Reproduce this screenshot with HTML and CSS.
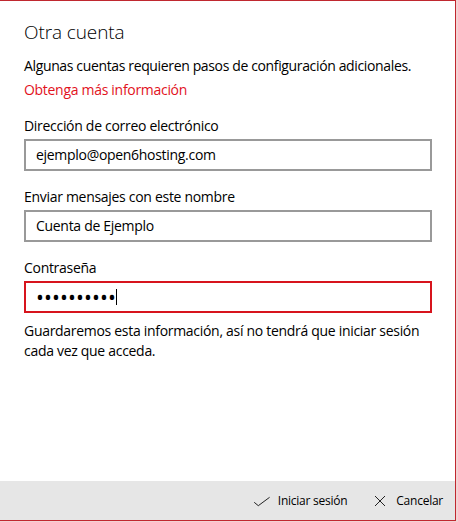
FILE: index.html
```html
<!DOCTYPE html>
<html lang="es">
<head>
<meta charset="utf-8">
<title>Otra cuenta</title>
<link rel="stylesheet" href="styles.css">
</head>
<body>
<div class="window">
  <main class="content">
    <h1 class="title">Otra cuenta</h1>
    <p class="desc">Algunas cuentas requieren pasos de configuración adicionales.</p>
    <a class="link" href="#">Obtenga más información</a>

    <div class="field">
      <label class="label">Dirección de correo electrónico</label>
      <div class="input">ejemplo@open6hosting.com</div>
    </div>
    <div class="field">
      <label class="label">Enviar mensajes con este nombre</label>
      <div class="input">Cuenta de Ejemplo</div>
    </div>
    <div class="field">
      <label class="label">Contraseña</label>
      <div class="input input-focus"><span class="dots">••••••••••</span><span class="caret"></span></div>
    </div>
    <p class="note">Guardaremos esta información, así no tendrá que iniciar sesión cada vez que acceda.</p>
  </main>
  <footer class="bar">
    <button class="btn">
      <svg class="icon" width="16" height="16" viewBox="0 0 16 16"><path d="M0.2 9.3 L4.3 12.7 L15.6 4.3" fill="none" stroke="#222" stroke-width="1"/></svg>
      <span>Iniciar sesión</span>
    </button>
    <button class="btn">
      <svg class="icon" width="16" height="16" viewBox="0 0 16 16"><path d="M3 3 L13 13 M13 3 L3 13" fill="none" stroke="#222" stroke-width="1"/></svg>
      <span>Cancelar</span>
    </button>
  </footer>
</div>
</body>
</html>
```
FILE: styles.css
```css
html, body {
  margin: 0;
  padding: 0;
}
body {
  background: #f2d3d4;
  font-family: "Open Sans", "Noto Sans", sans-serif;
  color: #000;
  width: 458px;
  height: 522px;
}
.window {
  box-sizing: border-box;
  width: 456px;
  height: 521px;
  background: #fff;
  border-top: 1px solid #c0282f;
  border-right: 1px solid #c0282f;
  border-bottom: 1px solid #c0282f;
  display: flex;
  flex-direction: column;
}
.content {
  flex: 1;
  padding: 17px 23px 0 24px;
  display: flex;
  flex-direction: column;
  align-items: flex-start;
}
.title {
  margin: 0;
  font-size: 19px;
  font-weight: 300;
  line-height: 28px;
  letter-spacing: -0.1px;
}
.desc {
  margin: 10px 0 0;
  font-size: 14px;
  line-height: 20px;
  letter-spacing: -0.36px;
}
.link {
  margin-top: 4px;
  font-size: 14px;
  line-height: 20px;
  color: #e2121d;
  text-decoration: none;
  letter-spacing: -0.3px;
}
.field {
  align-self: stretch;
  margin-top: 16px;
  display: flex;
  flex-direction: column;
  gap: 3px;
}
.label {
  font-size: 14px;
  line-height: 20px;
  letter-spacing: -0.3px;
}
.input {
  box-sizing: border-box;
  width: 408px;
  height: 32px;
  border: 2px solid #999;
  padding: 0 10px;
  display: flex;
  align-items: center;
  font-size: 14px;
  line-height: 20px;
  letter-spacing: -0.3px;
}
.input-focus {
  border-color: #d7141d;
}
.dots {
  font-size: 21px;
  letter-spacing: 0.1px;
  line-height: 20px;
}
.caret {
  width: 1px;
  height: 16px;
  background: #000;
  margin-left: 0;
}
.note {
  margin: 8px 0 0;
  font-size: 14px;
  line-height: 20px;
  letter-spacing: -0.3px;
  width: 400px;
}
.bar {
  height: 39px;
  background: #e6e6e6;
  display: flex;
  justify-content: flex-end;
  align-items: center;
  gap: 25px;
  padding-right: 12px;
}
.btn {
  display: flex;
  align-items: center;
  gap: 8px;
  padding: 0;
  border: 0;
  background: none;
  font-family: inherit;
  font-size: 12px;
  letter-spacing: -0.25px;
  color: #000;
  line-height: 20px;
}
.icon {
  display: block;
}
```
